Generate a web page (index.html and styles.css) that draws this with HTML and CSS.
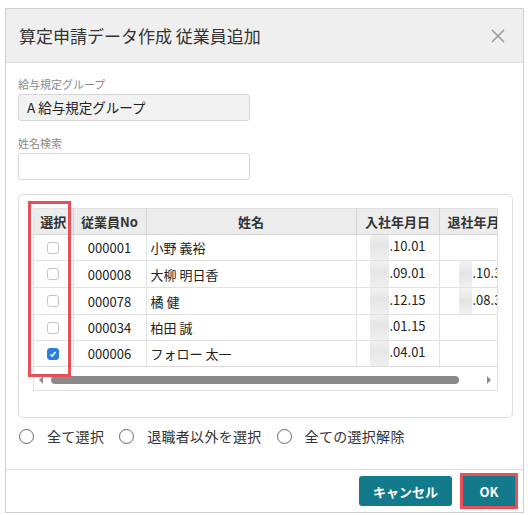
FILE: index.html
```html
<!DOCTYPE html>
<html lang="ja">
<head>
<meta charset="utf-8">
<link rel="stylesheet" href="styles.css">
</head>
<body>
<div class="dialog">
  <div class="dlg-head">
    <div class="dlg-title">算定申請データ作成 従業員追加</div>
    <svg class="close" width="14" height="14" viewBox="0 0 14 14"><path d="M1 1L13 13M13 1L1 13" stroke="#9a9a9a" stroke-width="1.6" fill="none"/></svg>
  </div>
  <div class="dlg-body">
    <div class="field">
      <div class="label">給与規定グループ</div>
      <div class="input readonly">A 給与規定グループ</div>
    </div>
    <div class="field">
      <div class="label">姓名検索</div>
      <div class="input"></div>
    </div>
    <div class="panel">
      <div class="grid">
        <div class="grid-clip">
          <table class="tbl">
            <colgroup>
              <col class="c1"><col class="c2"><col class="c3"><col class="c4"><col class="c5">
            </colgroup>
            <thead>
              <tr><th>選択</th><th>従業員No</th><th>姓名</th><th>入社年月日</th><th class="left">退社年月日</th></tr>
            </thead>
            <tbody>
              <tr><td class="chk"><span class="cb"></span></td><td class="ctr">000001</td><td>小野 義裕</td><td class="date"><span class="blur"></span>.10.01</td><td class="date2"></td></tr>
              <tr><td class="chk"><span class="cb"></span></td><td class="ctr">000008</td><td>大柳 明日香</td><td class="date"><span class="blur"></span>.09.01</td><td class="date2"><span class="blur2"></span>.10.31</td></tr>
              <tr><td class="chk"><span class="cb"></span></td><td class="ctr">000078</td><td>橘 健</td><td class="date"><span class="blur"></span>.12.15</td><td class="date2"><span class="blur2"></span>.08.31</td></tr>
              <tr><td class="chk"><span class="cb"></span></td><td class="ctr">000034</td><td>柏田 誠</td><td class="date"><span class="blur"></span>.01.15</td><td class="date2"></td></tr>
              <tr><td class="chk"><span class="cb on"><svg width="8" height="8" viewBox="0 0 8 8"><path d="M1.5 4.5L3.2 6L6.5 2" stroke="#fff" stroke-width="1.6" fill="none"/></svg></span></td><td class="ctr">000006</td><td>フォロー 太一</td><td class="date"><span class="blur"></span>.04.01</td><td class="date2"></td></tr>
            </tbody>
          </table>
        </div>
        <div class="hscroll">
          <span class="arr-l"></span>
          <span class="thumb"></span>
          <span class="arr-r"></span>
        </div>
      </div>
      <div class="mark"></div>
    </div>
    <div class="radios">
      <label class="radio"><span class="rc"></span>全て選択</label>
      <label class="radio"><span class="rc"></span>退職者以外を選択</label>
      <label class="radio"><span class="rc"></span>全ての選択解除</label>
    </div>
  </div>
  <div class="dlg-foot">
    <button class="btn">キャンセル</button>
    <button class="btn ok">OK</button>
  </div>
</div>
</body>
</html>
```
FILE: styles.css
```css
* { box-sizing: border-box; }
html, body { margin: 0; padding: 0; background: #fff; }
body {
  font-family: "Noto Sans CJK JP", "Noto Sans", sans-serif;
  color: #333;
  padding: 8px 0 0 5px;
}
.dialog {
  width: 519px;
  height: 505px;
  border: 1px solid #cfcfcf;
  display: flex;
  flex-direction: column;
}
.dlg-head {
  height: 54px;
  background: #efefef;
  border-bottom: 1px solid #dcdcdc;
  display: flex;
  align-items: center;
  justify-content: space-between;
  padding: 0 18px 0 13px;
}
.dlg-title { font-size: 17px; line-height: 20px; color: #333; }
.close { display: block; }
.dlg-body {
  flex: 1;
  padding: 13px 10px 0 12px;
}
.field { width: 232px; margin-bottom: 14px; }
.label { font-size: 11px; line-height: 16px; color: #8a8a8a; margin-bottom: 2px; }
.input {
  height: 27px;
  border: 1px solid #d7d7d7;
  border-radius: 3px;
  background: #fff;
  font-size: 13.5px;
  line-height: 25px;
  padding-left: 8px;
  color: #222;
}
.input.readonly { background: #f2f2f2; }
.panel {
  position: relative;
  border: 1px solid #dedede;
  border-radius: 5px;
  padding: 13px 14px 26px 14px;
  margin-top: 5px;
}
.grid { border: 1px solid #e0e0e0; border-top: none; width: 465px; }
.grid-clip { width: 463px; overflow: hidden; }
.tbl {
  border-collapse: collapse;
  table-layout: fixed;
  width: 500px;
  font-size: 13px;
}
.c1 { width: 39px; } .c2 { width: 73px; } .c3 { width: 210px; } .c4 { width: 83px; } .c5 { width: 95px; }
.tbl th {
  height: 26px;
  background: #ececec;
  font-weight: bold;
  color: #333;
  border: 1px solid #d4d4d4;
  border-top: 1px solid #e2e2e2;
  padding: 0 4px;
  text-align: center;
  white-space: nowrap;
  overflow: hidden;
}
.tbl th:first-child { border-left: none; }
.tbl th.left { text-align: left; padding-left: 8px; }
.tbl td {
  height: 26px;
  border: 1px solid #e2e2e2;
  padding: 0 4px;
  white-space: nowrap;
  overflow: hidden;
  color: #222;
}
.tbl td:first-child { border-left: none; }
.tbl tbody tr:last-child td { border-bottom: 1px solid #dcdcdc; }
.tbl td.ctr { text-align: center; }
.chk { text-align: center; }
.cb {
  display: inline-flex;
  align-items: center;
  justify-content: center;
  width: 12px;
  height: 12px;
  border: 1px solid #c4c4c4;
  border-radius: 3px;
  vertical-align: middle;
  background: #fff;
  margin-top: -3px;
}
.cb.on { background: #2a7de1; border-color: #2a7de1; }
.cb svg { display: block; }
.date { text-align: left; padding-left: 13px !important; }
.date2 { text-align: left; padding-left: 19px !important; }
.blur {
  display: inline-block;
  width: 19px;
  height: 26px;
  vertical-align: middle;
  margin-right: 1px;
  margin-top: -1px;
  background: linear-gradient(#f1f1f1, #e6e6e6 40%, #efefef);
}
.blur2 {
  display: inline-block;
  width: 13px;
  height: 26px;
  vertical-align: middle;
  margin-right: 1px;
  background: linear-gradient(#f3f3f3, #e4e4e4 50%, #f1f1f1);
}
.hscroll {
  height: 23px;
  display: flex;
  align-items: center;
  padding: 2px 6px 0 5px;
}
.arr-l {
  width: 0; height: 0;
  border-top: 4px solid transparent;
  border-bottom: 4px solid transparent;
  border-right: 4px solid #8d8d8d;
  margin-right: 8px;
}
.thumb {
  width: 408px;
  height: 8px;
  border-radius: 4px;
  background: #8a8a8a;
}
.arr-r {
  width: 0; height: 0;
  border-top: 4px solid transparent;
  border-bottom: 4px solid transparent;
  border-left: 4px solid #8d8d8d;
  margin-left: auto;
}
.mark {
  position: absolute;
  left: 9px;
  top: 6px;
  width: 43px;
  height: 176px;
  border: 3px solid #ea4f58;
}
.radios {
  display: flex;
  align-items: center;
  gap: 15px;
  margin-top: 9px;
  padding-left: 1px;
}
.radio {
  display: flex;
  align-items: center;
  font-size: 14px;
  line-height: 18px;
  color: #333;
  letter-spacing: 0.3px;
}
.rc {
  width: 15px;
  height: 15px;
  border: 1.5px solid #666;
  border-radius: 50%;
  margin-right: 13px;
}
.dlg-foot {
  height: 43px;
  border-top: 1px solid #dedede;
  display: flex;
  justify-content: flex-end;
  align-items: center;
  gap: 11px;
  padding: 0 8px 0 0;
}
.btn {
  height: 30px;
  border: none;
  border-radius: 3px;
  background: #137a8b;
  color: #fff;
  font-family: "Noto Sans CJK JP", "Noto Sans", sans-serif;
  font-weight: bold;
  font-size: 13px;
  padding: 0 14px;
  min-width: 88px;
}
.btn.ok {
  min-width: 52px;
  border-radius: 0;
  outline: 3px solid #ea4f58;
  outline-offset: 0;
}
```
